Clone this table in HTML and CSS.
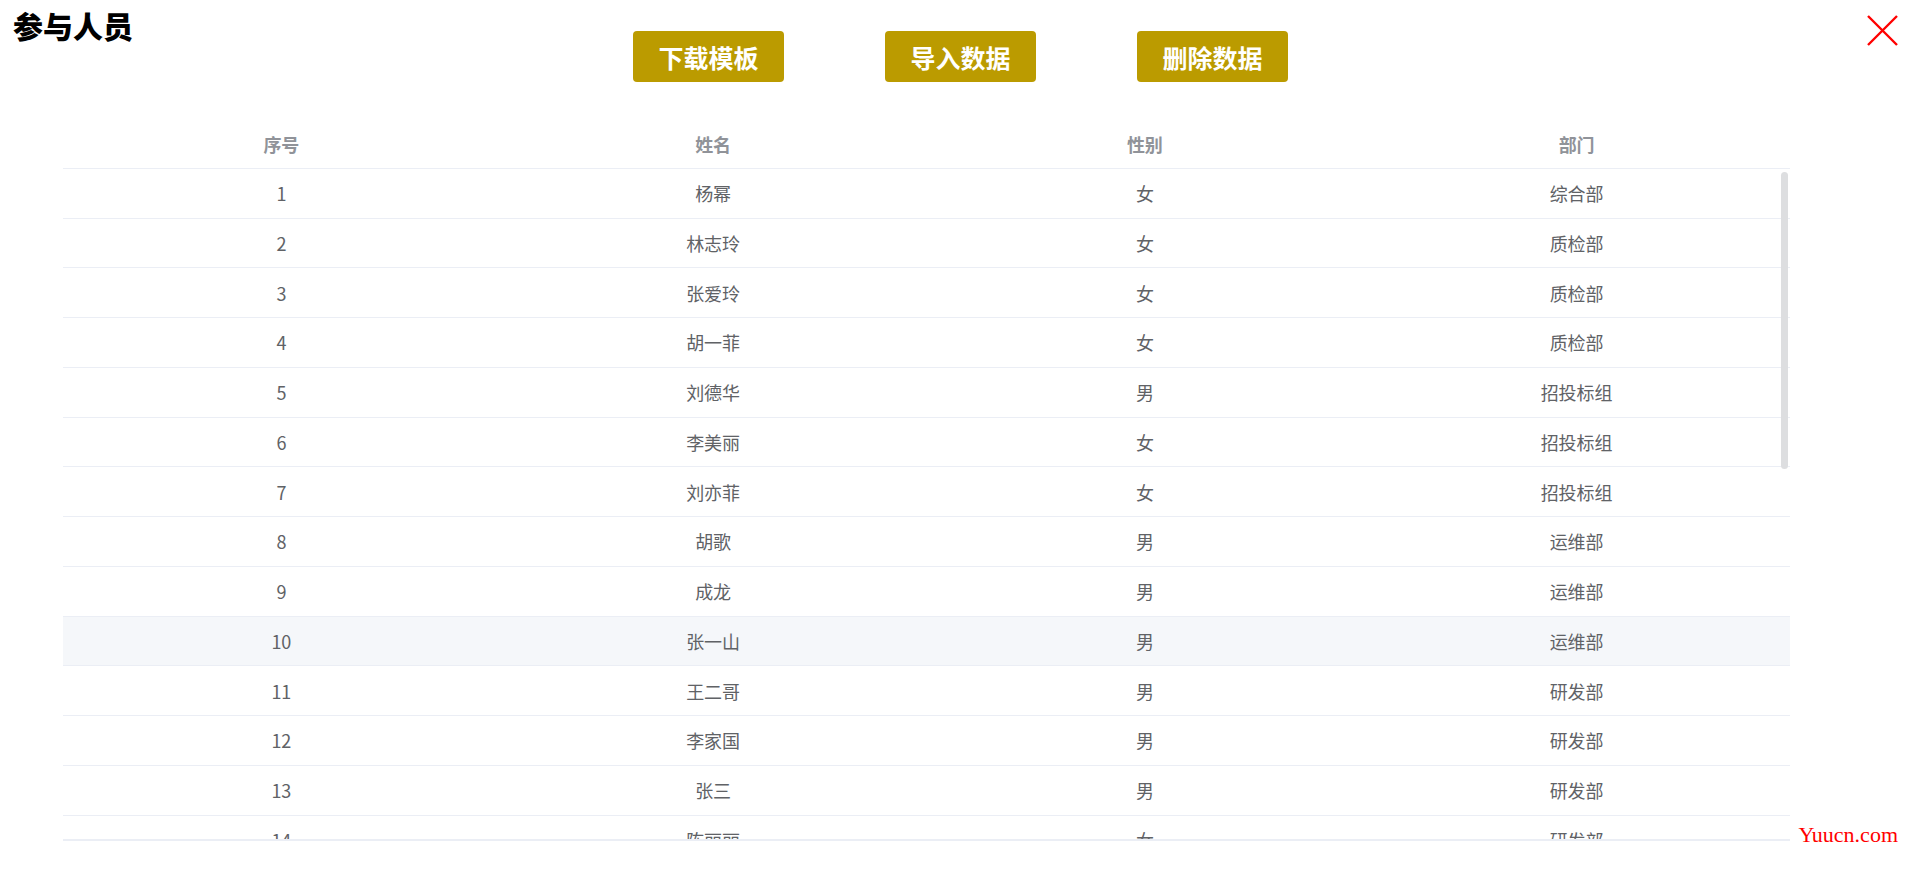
FILE: index.html
```html
<!DOCTYPE html>
<html lang="zh-CN">
<head>
<meta charset="utf-8">
<title>参与人员</title>
<link rel="stylesheet" href="styles.css">
</head>
<body>
<div class="page">
  <header class="top">
    <h1 class="title">参与人员</h1>
    <div class="actions">
      <button class="btn">下载模板</button>
      <button class="btn">导入数据</button>
      <button class="btn">删除数据</button>
    </div>
    <div class="close">
      <svg width="31" height="31" viewBox="0 0 31 31"><path d="M1 1 L30 30 M30 1 L1 30" stroke="#ff0000" stroke-width="2.4" fill="none"/></svg>
    </div>
  </header>

  <div class="table">
    <div class="row head">
      <div class="cell">序号</div>
      <div class="cell">姓名</div>
      <div class="cell">性别</div>
      <div class="cell">部门</div>
    </div>
    <div class="body-wrap">
      <div class="body">
        <div class="row"><div class="cell">1</div><div class="cell">杨幂</div><div class="cell">女</div><div class="cell">综合部</div></div>
        <div class="row"><div class="cell">2</div><div class="cell">林志玲</div><div class="cell">女</div><div class="cell">质检部</div></div>
        <div class="row"><div class="cell">3</div><div class="cell">张爱玲</div><div class="cell">女</div><div class="cell">质检部</div></div>
        <div class="row"><div class="cell">4</div><div class="cell">胡一菲</div><div class="cell">女</div><div class="cell">质检部</div></div>
        <div class="row"><div class="cell">5</div><div class="cell">刘德华</div><div class="cell">男</div><div class="cell">招投标组</div></div>
        <div class="row"><div class="cell">6</div><div class="cell">李美丽</div><div class="cell">女</div><div class="cell">招投标组</div></div>
        <div class="row"><div class="cell">7</div><div class="cell">刘亦菲</div><div class="cell">女</div><div class="cell">招投标组</div></div>
        <div class="row"><div class="cell">8</div><div class="cell">胡歌</div><div class="cell">男</div><div class="cell">运维部</div></div>
        <div class="row"><div class="cell">9</div><div class="cell">成龙</div><div class="cell">男</div><div class="cell">运维部</div></div>
        <div class="row hover"><div class="cell">10</div><div class="cell">张一山</div><div class="cell">男</div><div class="cell">运维部</div></div>
        <div class="row"><div class="cell">11</div><div class="cell">王二哥</div><div class="cell">男</div><div class="cell">研发部</div></div>
        <div class="row"><div class="cell">12</div><div class="cell">李家国</div><div class="cell">男</div><div class="cell">研发部</div></div>
        <div class="row"><div class="cell">13</div><div class="cell">张三</div><div class="cell">男</div><div class="cell">研发部</div></div>
        <div class="row"><div class="cell">14</div><div class="cell">陈丽丽</div><div class="cell">女</div><div class="cell">研发部</div></div>
        <div class="row"><div class="cell">15</div><div class="cell">李四</div><div class="cell">男</div><div class="cell">研发部</div></div>
        <div class="row"><div class="cell">16</div><div class="cell">王五</div><div class="cell">男</div><div class="cell">研发部</div></div>
      </div>
      <div class="thumb"></div>
    </div>
  </div>

  <div class="watermark">Yuucn.com</div>
</div>
</body>
</html>
```

FILE: styles.css
```css
html, body {
  margin: 0;
  padding: 0;
  background: #ffffff;
}

body {
  font-family: "Noto Sans CJK SC", "Noto Sans", sans-serif;
}

.page {
  position: relative;
  width: 1910px;
  height: 891px;
  overflow: hidden;
}

.top {
  display: grid;
  grid-template-columns: 1fr auto 1fr;
  height: 119px;
}

.title {
  margin: 0;
  padding: 7px 0 0 13px;
  font-size: 30px;
  line-height: 36px;
  font-weight: 900;
  color: #000000;
  align-self: start;
}

.actions {
  display: flex;
  gap: 101px;
  padding-top: 31px;
  margin-left: 11px;
  align-self: start;
}

.btn {
  width: 151px;
  height: 51px;
  border: none;
  border-radius: 4px;
  background: #bb9b00;
  color: #ffffff;
  font-family: "Noto Sans CJK SC", sans-serif;
  font-size: 25px;
  font-weight: bold;
  display: flex;
  align-items: center;
  justify-content: center;
  padding: 0;
}

.close {
  justify-self: end;
  align-self: start;
  margin: 15px 12px 0 0;
  display: flex;
}

.table {
  margin-left: 63px;
  width: 1727px;
  font-size: 18px;
  color: #606266;
}

.row {
  display: grid;
  grid-template-columns: repeat(4, 1fr);
  height: 49.75px;
  box-sizing: border-box;
  border-bottom: 1px solid #ebeef5;
}

.row.hover {
  background: #f5f7fa;
}

.cell {
  display: flex;
  align-items: center;
  justify-content: center;
  padding-left: 5px;
}

.head {
  color: #909399;
  font-weight: bold;
}

.head .cell {
  padding-top: 2px;
}

.body-wrap {
  position: relative;
  height: 672px;
  overflow: hidden;
  box-sizing: border-box;
  border-bottom: 2px solid #ebeef5;
}

.thumb {
  position: absolute;
  right: 2px;
  top: 3px;
  width: 7px;
  height: 297px;
  border-radius: 4px;
  background: #dddee0;
}

.watermark {
  position: absolute;
  right: 12px;
  top: 822px;
  font-family: "Liberation Serif", serif;
  font-size: 22px;
  color: #ff0000;
}
```
